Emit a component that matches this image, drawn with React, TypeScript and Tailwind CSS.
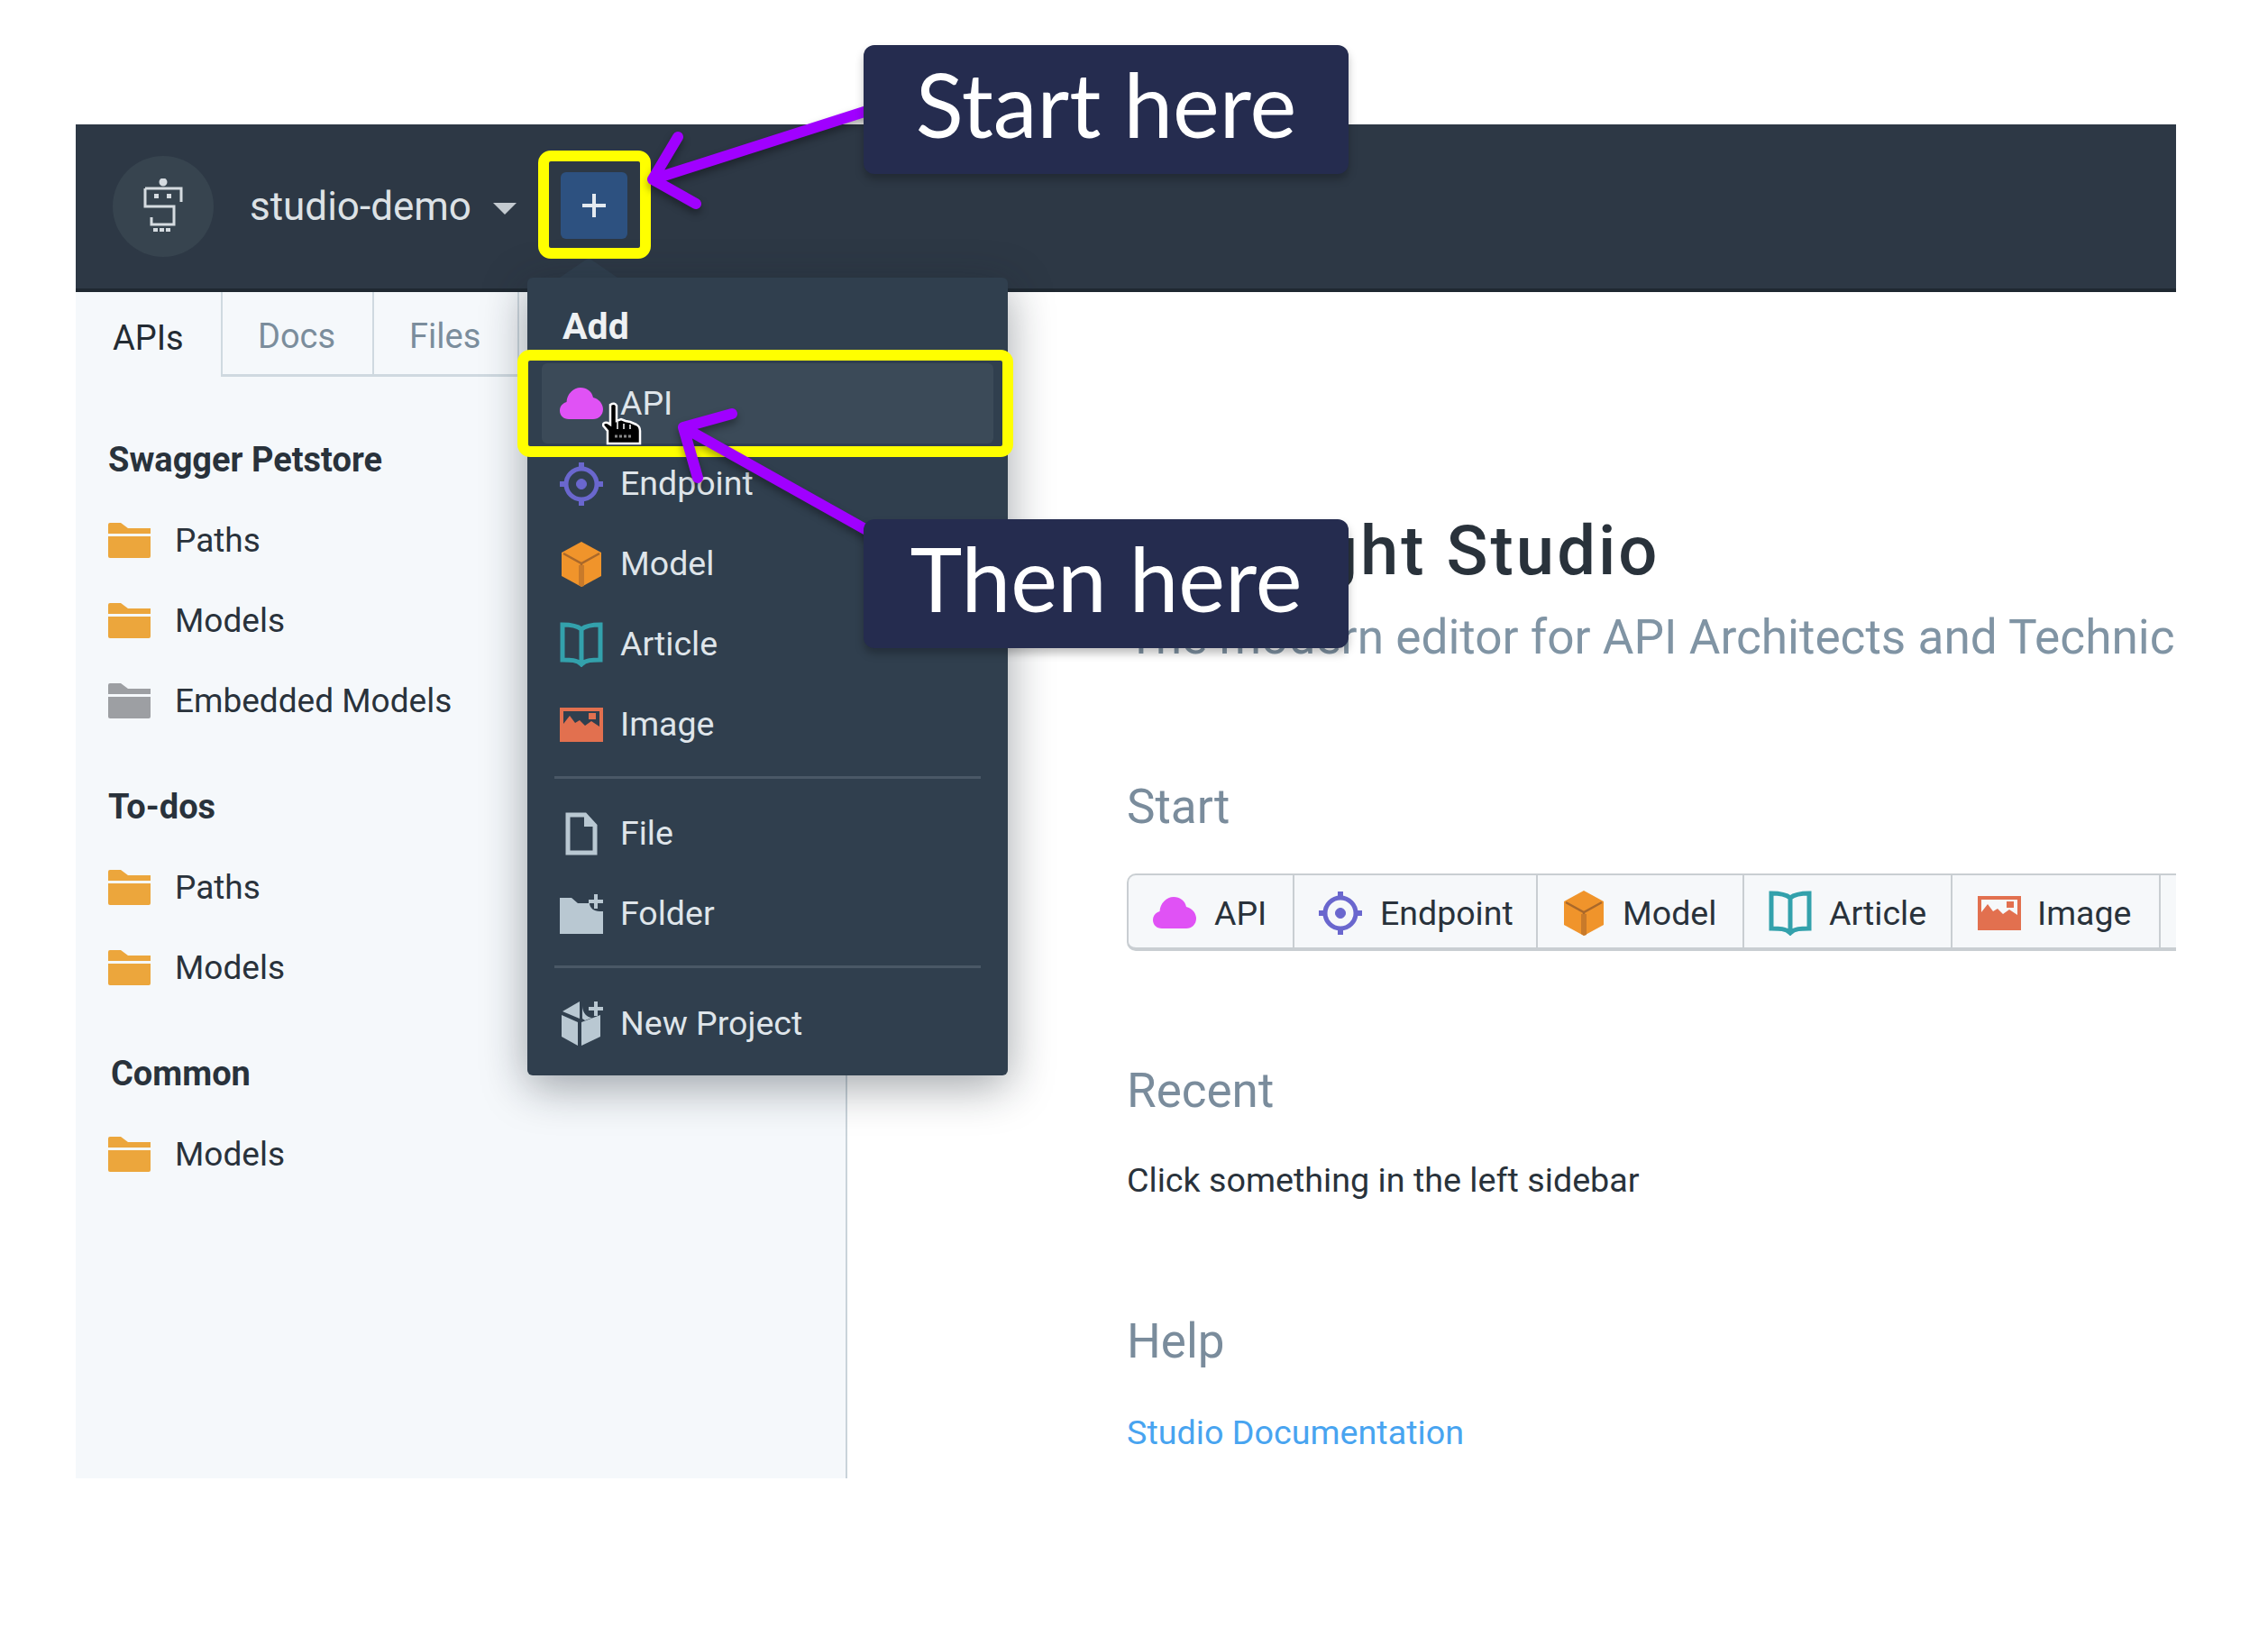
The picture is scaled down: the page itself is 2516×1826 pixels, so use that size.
import type { ReactNode } from "react";

const roboto = "font-['Roboto',sans-serif]";

function Cloud({ className }: { className?: string }) {
  return (
    <svg viewBox="0 0 48 36" className={className} fill="#e052f5">
      <path d="M10 35C4 35 0 31 0 25.500C0 20.500 3.500 17 7.500 16C8 7 15 0 23 0C30 0 35.500 4 37 11C43.500 12.500 48 18 48 24C48 30.500 43 35 37 35Z" />
    </svg>
  );
}

function Target({ className }: { className?: string }) {
  return (
    <svg viewBox="0 0 48 48" className={className} fill="none" stroke="#6a67ce">
      <circle cx="24" cy="24" r="17" strokeWidth="5" />
      <circle cx="24" cy="24" r="5.500" fill="#6a67ce" strokeWidth="1" />
      <path d="M24 0V8M24 40V48M0 24H8M40 24H48" strokeWidth="6" />
    </svg>
  );
}

function Cube({ className }: { className?: string }) {
  return (
    <svg viewBox="0 0 44 50" className={className}>
      <path d="M22 0L44 12V38L22 50L0 38V12Z" fill="#f0942b" />
      <path d="M2 13L22 24L42 13M22 24V49" fill="none" stroke="#a9682a" strokeWidth="2.500" />
      <path d="M19 26H25V49L22 50L19 48Z" fill="#c87a2a" />
    </svg>
  );
}

function Book({ className }: { className?: string }) {
  return (
    <svg viewBox="0 0 48 50" className={className} fill="none" stroke="#33a1ac" strokeWidth="5">
      <path d="M24 8C19 4 12 3 3 3V42C12 42 19 42 24 47C29 42 36 42 45 42V3C36 3 29 4 24 8V47" />
    </svg>
  );
}

function Picture({ className }: { className?: string }) {
  return (
    <svg viewBox="0 0 48 38" className={className} fill="#e2704f">
      <path fillRule="evenodd" d="M0 0H48V38H0ZM4 4V34H44V4Z" />
      <path d="M4 34V18L11 9L17 17L22 14L28 20L35 15L44 21V34Z" />
      <rect x="32" y="6" width="8" height="7" />
    </svg>
  );
}

function FileIcon({ className }: { className?: string }) {
  return (
    <svg viewBox="0 0 36 48" className={className} fill="none" stroke="#b9c8d2" strokeWidth="5">
      <path d="M3 3H22L33 15V45H3Z" />
      <path d="M22 3V15H33" fill="#b9c8d2" strokeWidth="2" />
    </svg>
  );
}

function FolderPlus({ className }: { className?: string }) {
  return (
    <svg viewBox="0 0 48 44" className={className} fill="#b9c8d2">
      <path d="M0 4L13 4L20 10H33C33 15 38 19 44 19H48V44H0V17Z" />
      <path d="M38 0H42V6H48V10H42V16H38V10H32V6H38Z" />
    </svg>
  );
}

function CubePlus({ className }: { className?: string }) {
  return (
    <svg viewBox="0 0 48 50" className={className} fill="#b9c8d2">
      <path d="M22 0V19L3 11Z" />
      <path d="M2 15L20 23V49L2 39Z" />
      <path d="M24 23L45 15V39L24 49Z" />
      <path d="M25 5C25 12 30 18 36 18L28 21L25 19Z" />
      <path d="M38 0H42V6H48V10H42V16H38V10H32V6H38Z" />
    </svg>
  );
}

function Folder({ color }: { color: string }) {
  return (
    <svg viewBox="0 0 47 39" className="h-[39px] w-[47px] shrink-0" fill={color}>
      <path d="M0 2Q0 0 2 0H14L22 6H47V12H0Z" />
      <path d="M0 15H47V37Q47 39 45 39H2Q0 39 0 37Z" />
    </svg>
  );
}

function Robot() {
  return (
    <svg viewBox="0 0 44 62" className="h-[62px] w-[44px]" fill="none" stroke="#d5dbe0" strokeWidth="3">
      <circle cx="22" cy="4" r="3" fill="#d5dbe0" />
      <path d="M2 11H42V26M2 11V31H34V51H9V43" />
      <rect x="12" y="17" width="5" height="5" fill="#d5dbe0" stroke="none" />
      <rect x="26" y="17" width="5" height="5" fill="#d5dbe0" stroke="none" />
      <path d="M11 57H32" strokeWidth="4" strokeDasharray="5 2" />
    </svg>
  );
}

function Hand() {
  return (
    <svg viewBox="0 0 44 48" className="absolute left-[668px] top-[446px] h-[48px] w-[44px]">
      <path
        d="M9 3Q14 0 16 4V21L21 19L26 21L31 22L38 25Q42 27 42 32V46H6V32L1 26Q1 22 6 23L9 25Z"
        fill="#000"
        stroke="#fff"
        strokeWidth="2.500"
      />
      <path d="M17 22V30M24 24V30M31 25V30" stroke="#fff" strokeWidth="1.500" />
      <path d="M14 38H34" stroke="#888" strokeWidth="3" strokeDasharray="3 2" />
    </svg>
  );
}

const sidebar = [
  {
    title: "Swagger Petstore",
    pad: "pl-9",
    items: [
      ["Paths", "#eca63c"],
      ["Models", "#eca63c"],
      ["Embedded Models", "#9d9fa3"],
    ],
  },
  {
    title: "To-dos",
    pad: "pl-9",
    items: [
      ["Paths", "#eca63c"],
      ["Models", "#eca63c"],
    ],
  },
  {
    title: "Common",
    pad: "pl-[39px]",
    items: [["Models", "#eca63c"]],
  },
];

const startButtons = [
  { label: "API", width: "w-[184px]", pad: "pl-[27px]", gap: "gap-[20px]", icon: <Cloud className="h-[36px] w-[48px]" /> },
  { label: "Endpoint", width: "w-[270px]", pad: "pl-[27px]", gap: "gap-[20px]", icon: <Target className="h-[48px] w-[48px]" /> },
  { label: "Model", width: "w-[229px]", pad: "pl-[29px]", gap: "gap-[21px]", icon: <Cube className="h-[50px] w-[44px]" /> },
  { label: "Article", width: "w-[231px]", pad: "pl-[27px]", gap: "gap-[19px]", icon: <Book className="h-[50px] w-[48px]" /> },
  { label: "Image", width: "w-[231px]", pad: "pl-[28px]", gap: "gap-[18px]", icon: <Picture className="h-[38px] w-[48px]" /> },
];

function MenuRow({ icon, label, active }: { icon: ReactNode; label: string; active?: boolean }) {
  return (
    <div className={`mx-4 flex h-[89px] items-center rounded-md pl-[20px] ${active ? "bg-[#3b4a58]" : ""}`}>
      <div className="flex w-[48px] justify-center">{icon}</div>
      <span className="ml-[19px] text-[37.500px] text-[#dfe5ea]">{label}</span>
    </div>
  );
}

function Callout({ label, className }: { label: string; className: string }) {
  return (
    <div
      className={`absolute left-[958px] flex h-[143px] w-[538px] items-center justify-center rounded-[12px] bg-[#252c4f] pb-3 font-['Lato',sans-serif] text-[98px] text-white shadow-[0_6px_10px_rgba(0,0,0,0.25)] ${className}`}
    >
      {label}
    </div>
  );
}

export default function App() {
  return (
    <div className={`relative h-[1826px] w-[2516px] overflow-hidden bg-white pl-[84px] pt-[138px] ${roboto}`}>
      <div className="flex h-[1502px] w-[2330px] flex-col overflow-hidden">
        {/* Top bar */}
        <div className="flex h-[186px] shrink-0 items-center border-b-4 border-[#1f2831] bg-[#2d3845] pl-[41px]">
          <div className="flex h-[112px] w-[112px] items-center justify-center rounded-full bg-[#37444f]">
            <Robot />
          </div>
          <span className="ml-10 text-[44px] text-[#dde2e6]">studio-demo</span>
          <div className="ml-6 mt-1 h-0 w-0 border-x-[13px] border-t-[13px] border-x-transparent border-t-[#c3cad0]" />
          <div className="-mt-[2px] ml-[49px] flex h-[74px] w-[74px] items-center justify-center rounded-md bg-[#2d5180]">
            <svg viewBox="0 0 26 26" className="h-[26px] w-[26px]" fill="#e4eaf0">
              <path d="M11 0H15V11H26V15H15V26H11V15H0V11H11Z" />
            </svg>
          </div>
        </div>

        <div className="flex min-h-0 flex-1">
          {/* Sidebar */}
          <div className="w-[856px] shrink-0 border-r-2 border-[#c9d3da] bg-[#f5f8fb]">
            <div className="flex h-[94px] text-[38px]">
              <div className="flex w-[161px] items-center pl-[41px] pt-2 text-[#232b33]">APIs</div>
              <div className="flex w-[168px] items-center border-b-[3px] border-l-2 border-[#cfd9e0] pl-[39px] pt-2 text-[#7b8d9c]">Docs</div>
              <div className="flex w-[163px] items-center border-x-2 border-b-[3px] border-[#cfd9e0] pl-[39px] pt-2 text-[#7b8d9c]">Files</div>
            </div>
            <div className="flex flex-col gap-[29px] pt-[48px]">
              {sidebar.map((group) => (
                <div key={group.title}>
                  <div className={`flex h-[89px] items-center text-[38px] font-bold text-[#29323b] ${group.pad}`}>{group.title}</div>
                  {group.items.map(([label, color], index) => (
                    <div key={index} className="flex h-[89px] items-center pl-9">
                      <Folder color={color} />
                      <span className="ml-[27px] text-[37px] text-[#29323b]">{label}</span>
                    </div>
                  ))}
                </div>
              ))}
            </div>
          </div>

          {/* Main */}
          <div className="min-w-0 flex-1 overflow-hidden bg-white pl-[310px] pt-[237px]">
            <div className="flex h-[100px] items-center whitespace-nowrap text-[76px] font-medium tracking-[3px] text-[#29323b]">Stoplight Studio</div>
            <div className="mt-[17px] flex h-[60px] items-center whitespace-nowrap text-[53.200px] text-[#8094a4]">
              The modern editor for API Architects and Technical Writers
            </div>
            <div className="mt-[128px] flex h-[60px] items-center text-[53px] text-[#7a8c9c]">Start</div>
            <div className="mt-[43px] flex h-[86px] w-[1300px] rounded-l-[10px] border-y-2 border-b-[4px] border-l-2 border-[#c9ced2] bg-[#f6f8fa]">
              {startButtons.map((button) => (
                <div key={button.label} className={`flex shrink-0 items-center border-r-2 border-[#c9ced2] pt-1 ${button.width} ${button.pad} ${button.gap}`}>
                  {button.icon}
                  <span className="text-[37.500px] text-[#29323b]">{button.label}</span>
                </div>
              ))}
            </div>
            <div className="mt-[126px] flex h-[60px] items-center text-[53px] text-[#7a8c9c]">Recent</div>
            <div className="mt-[43px] flex h-[50px] items-center text-[37.700px] text-[#29323b]">Click something in the left sidebar</div>
            <div className="mt-[125px] flex h-[60px] items-center text-[53px] text-[#7a8c9c]">Help</div>
            <div className="mt-[45px] flex h-[50px] items-center text-[37.700px] text-[#48a4f0]">Studio Documentation</div>
          </div>
        </div>
      </div>

      {/* Add menu */}
      <svg viewBox="0 0 70 24" className="absolute left-[618px] top-[286px] h-[24px] w-[70px]" fill="#303f4e">
        <path d="M0 24L35 0L70 24Z" />
      </svg>
      <div className="absolute left-[585px] top-[308px] h-[885px] w-[533px] rounded-md bg-[#303f4e] pt-[25px] shadow-[0_12px_50px_rgba(20,30,40,0.4)]">
        <div className="flex h-[60px] items-center pl-[39px] text-[41px] font-bold text-[#eef1f3]">Add</div>
        <div className="mt-[10px]">
          <MenuRow active icon={<Cloud className="h-[36px] w-[48px]" />} label="API" />
          <MenuRow icon={<Target className="h-[48px] w-[48px]" />} label="Endpoint" />
          <MenuRow icon={<Cube className="h-[50px] w-[44px]" />} label="Model" />
          <MenuRow icon={<Book className="h-[50px] w-[48px]" />} label="Article" />
          <MenuRow icon={<Picture className="h-[38px] w-[48px]" />} label="Image" />
        </div>
        <div className="mx-[30px] mb-[16px] mt-[13px] h-[3px] bg-[#4a5866]" />
        <MenuRow icon={<FileIcon className="h-[48px] w-[36px]" />} label="File" />
        <MenuRow icon={<FolderPlus className="h-[44px] w-[48px]" />} label="Folder" />
        <div className="mx-[30px] mb-[17px] mt-[13px] h-[3px] bg-[#4a5866]" />
        <MenuRow icon={<CubePlus className="h-[50px] w-[48px]" />} label="New Project" />
      </div>

      <Hand />

      {/* Highlight boxes */}
      <div className="absolute left-[597px] top-[167px] h-[120px] w-[125px] rounded-[14px] border-[12px] border-[#ffff00]" />
      <div className="absolute left-[574px] top-[388px] h-[119px] w-[550px] rounded-[14px] border-[12px] border-[#ffff00]" />

      {/* Arrows */}
      <svg viewBox="0 0 2516 1826" className="absolute left-0 top-0 h-[1826px] w-[2516px] drop-shadow-[0_5px_4px_rgba(0,0,0,0.35)]" fill="none" stroke="#a000ff" strokeLinecap="round" strokeLinejoin="round">
        <path d="M965 122L724 199M752 152L724 199L772 226" strokeWidth="12" />
        <path d="M965 590L758 474M812 459L758 474L774 530" strokeWidth="12" />
      </svg>

      <Callout label="Start here" className="top-[50px]" />
      <Callout label="Then here" className="top-[576px]" />
    </div>
  );
}
